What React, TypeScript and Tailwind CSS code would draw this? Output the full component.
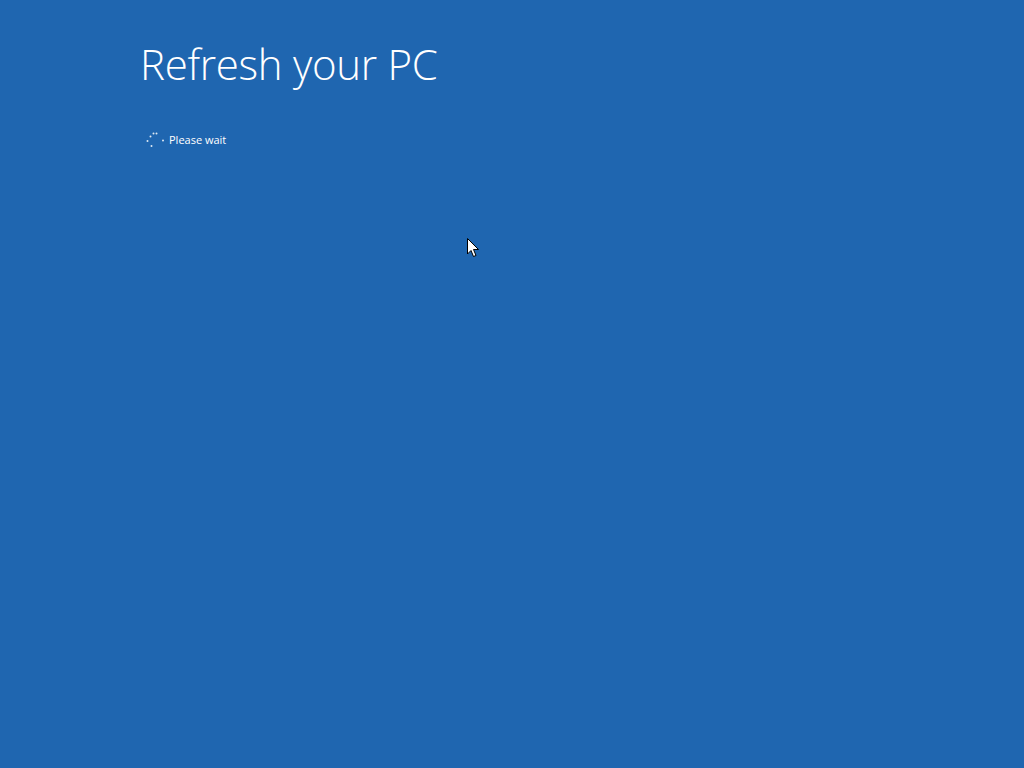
export default function App() {
  return (
    <div className="relative w-[1024px] h-[768px] bg-[#1f66b0] text-white overflow-hidden" style={{ fontFamily: '"Open Sans", "Noto Sans", sans-serif' }}>
      <div className="pl-[140px] pt-[36px]">
        <h1 className="text-[42px] font-light leading-[56px] tracking-[-0.3px]">Refresh your PC</h1>
        <div className="mt-[40px] ml-[6px] flex items-center gap-[4px]">
          <svg width="19" height="16" viewBox="0 0 19 16">
            <circle cx="7.5" cy="1.5" r="1" fill="#fff" opacity="0.85" />
            <circle cx="10.5" cy="1.5" r="1" fill="#fff" opacity="0.85" />
            <circle cx="4.5" cy="4.5" r="1" fill="#fff" opacity="0.85" />
            <circle cx="1.5" cy="9" r="1" fill="#fff" opacity="0.85" />
            <circle cx="17" cy="8.5" r="1" fill="#fff" opacity="0.85" />
            <circle cx="5.5" cy="14" r="1" fill="#fff" opacity="0.85" />
          </svg>
          <span className="text-[11px] leading-[16px]">Please wait</span>
        </div>
      </div>
      <svg className="absolute left-[467px] top-[238px]" width="13" height="20" viewBox="0 0 13 20">
        <path d="M0.5 0.5 L0.5 16 L4 12.5 L6.5 18.5 L9 17.5 L6.5 11.5 L11.5 11.5 Z" fill="#fff" stroke="#000" strokeWidth="1" />
      </svg>
    </div>
  );
}
